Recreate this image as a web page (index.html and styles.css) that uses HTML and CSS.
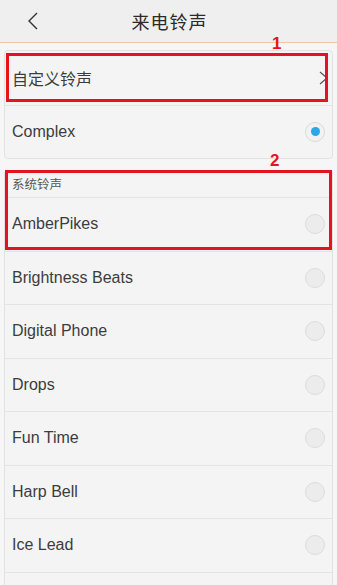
FILE: index.html
```html
<!DOCTYPE html>
<html lang="zh">
<head>
<meta charset="utf-8">
<link rel="stylesheet" href="styles.css">
</head>
<body>
<div class="header">
  <span class="back">
    <svg width="12" height="18" viewBox="0 0 12 18"><path d="M10 1 L2 9 L10 17" fill="none" stroke="#333" stroke-width="1.4"/></svg>
  </span>
  <span class="title">来电铃声</span>
</div>
<div class="content">
  <div class="card">
    <div class="row">
      <span class="label cjk">自定义铃声</span>
      <span class="arrow">
        <svg width="9" height="14" viewBox="0 0 9 14"><path d="M1 1 L8 7 L1 13" fill="none" stroke="#555" stroke-width="1.2"/></svg>
      </span>
      <div class="mark mark1"></div>
      <span class="num num1">1</span>
    </div>
    <div class="row">
      <span class="label">Complex</span>
      <span class="radio on"></span>
    </div>
  </div>
  <div class="card card2">
    <div class="section cjk">系统铃声</div>
    <div class="row">
      <span class="label">AmberPikes</span>
      <span class="radio"></span>
    </div>
    <div class="mark mark2"></div>
    <span class="num num2">2</span>
    <div class="row"><span class="label">Brightness Beats</span><span class="radio"></span></div>
    <div class="row"><span class="label">Digital Phone</span><span class="radio"></span></div>
    <div class="row"><span class="label">Drops</span><span class="radio"></span></div>
    <div class="row"><span class="label">Fun Time</span><span class="radio"></span></div>
    <div class="row"><span class="label">Harp Bell</span><span class="radio"></span></div>
    <div class="row"><span class="label">Ice Lead</span><span class="radio"></span></div>
    <div class="row"></div>
  </div>
</div>
</body>
</html>
```

FILE: styles.css
```css
* { box-sizing: border-box; }
html, body { margin: 0; padding: 0; }
body {
  width: 337px;
  height: 585px;
  overflow: hidden;
  background: #f6f6f6;
  font-family: "Liberation Sans", "Noto Sans CJK SC", sans-serif;
  color: #3a3a3a;
}
.cjk { font-family: "Noto Sans CJK SC", sans-serif; }
.header {
  height: 43px;
  background: #efefef;
  border-bottom: 1px solid #f2c7a6;
  display: flex;
  align-items: center;
  justify-content: center;
  position: relative;
}
.back {
  position: absolute;
  left: 27px;
  top: 12px;
  display: flex;
}
.title {
  font-family: "Noto Sans CJK SC", sans-serif;
  font-size: 18px;
  color: #2a2a2a;
  letter-spacing: 1px;
  margin-left: 2px;
}
.content {
  padding: 7px 4px 0 4px;
  display: flex;
  flex-direction: column;
  gap: 11px;
}
.card {
  background: #f4f4f4;
  border: 1px solid #e2e2e2;
  border-radius: 4px;
  position: relative;
}
.card2 { border-bottom: none; border-radius: 4px 4px 0 0; }
.row {
  height: 53.5px;
  display: flex;
  align-items: center;
  justify-content: space-between;
  padding: 0 7px 0 7px;
  border-top: 1px solid #e4e4e4;
  position: relative;
}
.card > .row:first-child { border-top: none; }
.label {
  font-size: 16px;
  color: #3c3c3c;
}
.arrow { display: flex; margin-right: -3px; }
.section {
  height: 26px;
  padding: 3px 0 0 7px;
  font-size: 12.5px;
  color: #555;
}
.radio {
  width: 20px;
  height: 20px;
  border-radius: 50%;
  background: #ececec;
  border: 1px solid #dcdcdc;
  display: flex;
  align-items: center;
  justify-content: center;
}
.radio.on {
  background: #f2f2f2;
  border: 1.5px solid #dadada;
}
.radio.on::after {
  content: "";
  width: 9px;
  height: 9px;
  border-radius: 50%;
  background: #2aa7ea;
}
.mark {
  position: absolute;
  border: 3px solid #e5141c;
  pointer-events: none;
}
.mark1 { left: 1px; top: 2px; width: 322px; height: 49px; }
.mark2 { left: 0px; top: -1px; width: 327px; height: 80px; }
.num {
  position: absolute;
  color: #e5141c;
  font-family: "Liberation Sans", sans-serif;
  font-weight: bold;
  font-size: 17px;
  line-height: 17px;
}
.num1 { left: 267px; top: -16px; }
.num2 { left: 265px; top: -19px; }
```
